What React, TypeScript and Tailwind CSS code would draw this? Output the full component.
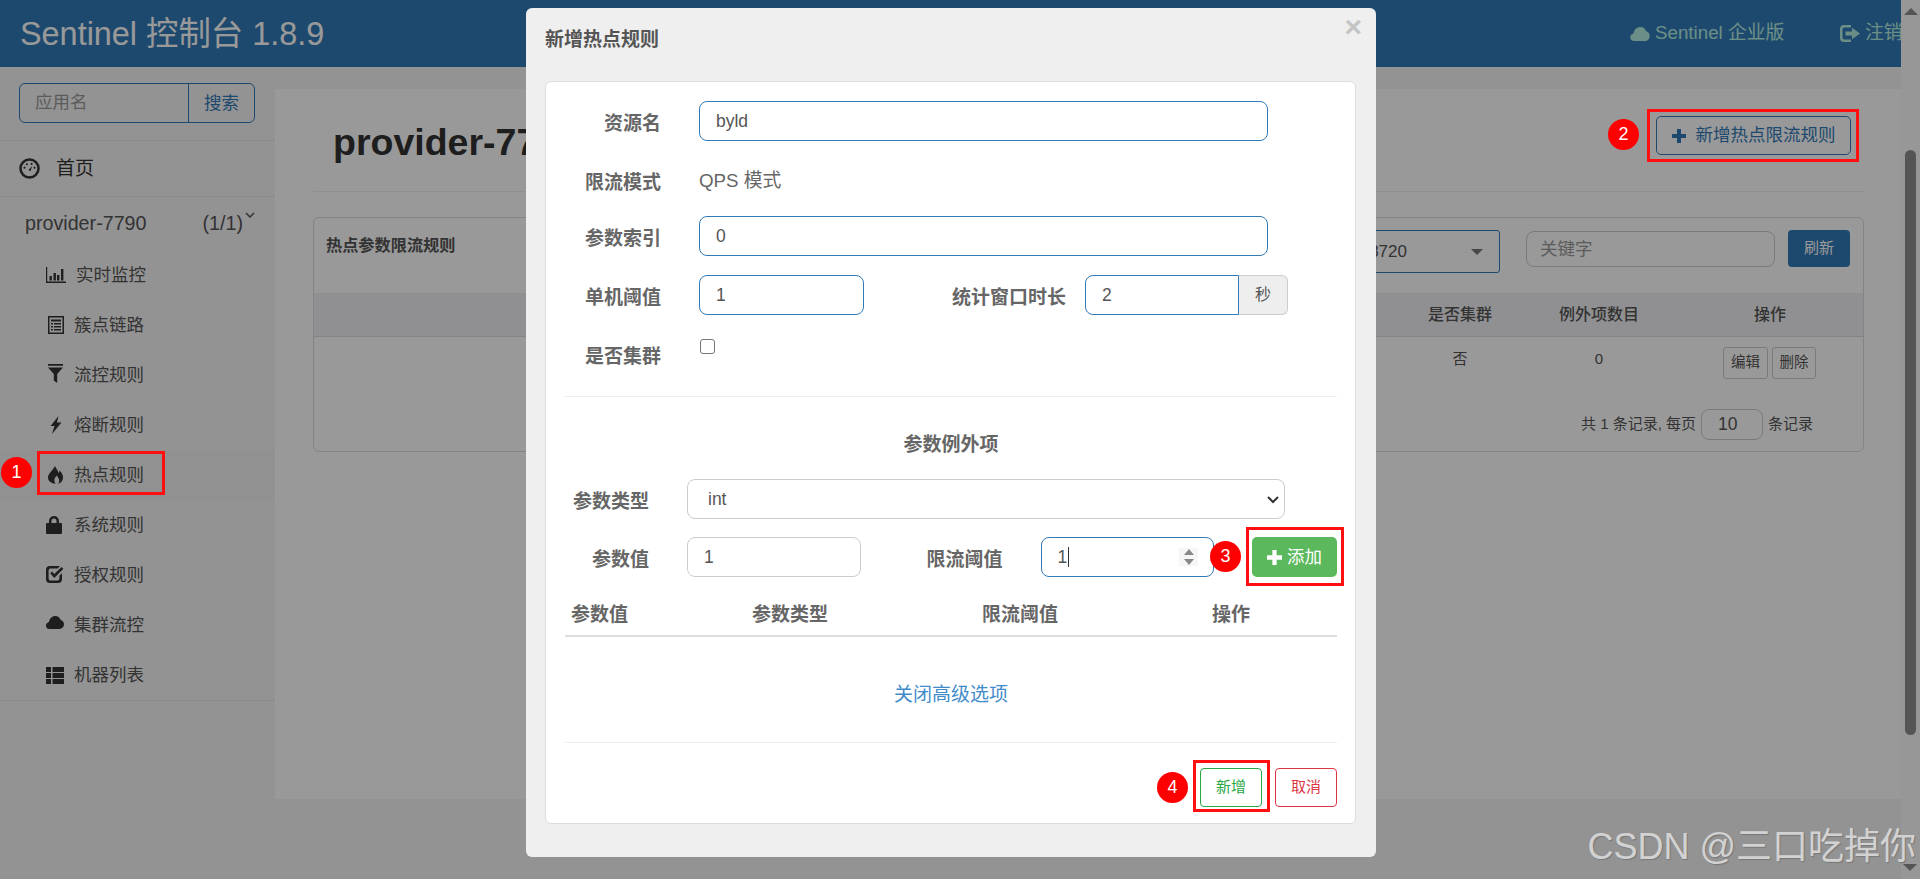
import React from "react";

const Svg = ({ w, h, vb, className, children }: { w: number; h: number; vb: string; className?: string; children: React.ReactNode }) => (
  <svg width={w} height={h} viewBox={vb} className={className} fill="currentColor">
    {children}
  </svg>
);

const IconDash = () => (
  <Svg w={21} h={21} vb="0 0 20 20">
    <circle cx="10" cy="10" r="8.6" fill="none" stroke="currentColor" strokeWidth="2.4" />
    <circle cx="5.2" cy="9.2" r="1" />
    <circle cx="7.5" cy="6" r="1" />
    <circle cx="12" cy="5.6" r="1" />
    <circle cx="14.8" cy="9.2" r="1" />
    <path d="M9 11.5 L12.5 7.5 L11 12.5 Z" />
  </Svg>
);
const IconStats = () => (
  <Svg w={20} h={16} vb="0 0 20 16">
    <path d="M0 0h1.2v14.6H20V16H0z" />
    <path d="M3.500 9h2.400v4.500H3.500zM7.500 6h2.400v7.500H7.500zM11 8h2.400v5.500H11zM15 2h2.400v11.500H15z" />
  </Svg>
);
const IconList = () => (
  <Svg w={16} h={18} vb="0 0 16 18">
    <path fillRule="evenodd" d="M0 0h16v18H0zM1.500 1.500v15h13v-15z" />
    <path d="M3 3.500h10v2H3zM3 7h2v1.600H3zM6 7h7v1.600H6zM3 10h2v1.600H3zM6 10h7v1.600H6zM3 13h2v1.600H3zM6 13h7v1.600H6z" />
  </Svg>
);
const IconFilter = () => (
  <Svg w={15} h={19} vb="0 0 15 19">
    <path d="M0 0h15v1.800H0zM0 3.400h15L9.200 10v9l-3.400-2.600V10z" />
  </Svg>
);
const IconFlash = () => (
  <Svg w={12} h={18} vb="0 0 12 18">
    <path d="M8.500 0 0.500 10h4L2 18l9.500-11.500h-4.600z" />
  </Svg>
);
const IconFire = () => (
  <Svg w={15} h={18} vb="0 0 15 18">
    <path d="M7 0c1.200 3.200 3 4 3.400 7 .8-.6 1.200-1.500 1.200-2.400 2 2 3.400 4.400 3.400 7 0 3.400-2.200 5.800-5.400 6.400 1.400-1.200 2-2.800 1.400-4.600-.4-1.400-1.600-2.200-2-3.800-1.400 1.200-2.600 2.600-2.600 4.800 0 1.600.6 2.800 1.600 3.600C3 17.400 0 15.200 0 11.600 0 7.400 4.600 5 7 0z" />
  </Svg>
);
const IconLock = () => (
  <Svg w={16} h={18} vb="0 0 16 18">
    <path fillRule="evenodd" d="M3 7V5a5 5 0 0 1 10 0v2h2a1 1 0 0 1 1 1v9a1 1 0 0 1-1 1H1a1 1 0 0 1-1-1V8a1 1 0 0 1 1-1zM5.500 7h5V5a2.500 2.500 0 0 0-5 0z" />
  </Svg>
);
const IconCheck = () => (
  <Svg w={18} h={17} vb="0 0 18 17">
    <path d="M4 0H14L11.600 2.600H4.500A1.900 1.900 0 0 0 2.600 4.500v8A1.900 1.900 0 0 0 4.500 14.400h7A1.900 1.900 0 0 0 13.400 12.500V9.800L16 7.200V13A4 4 0 0 1 12 17H4a4 4 0 0 1-4-4V4a4 4 0 0 1 4-4z" />
    <path d="M4.200 7.300 6 5.600l2.300 2.500L15.600 1 17.400 2.800 8.300 12z" />
  </Svg>
);
const IconCloud = ({ w = 18, h = 13 }: { w?: number; h?: number }) => (
  <Svg w={w} h={h} vb="0 0 18 13">
    <path d="M3.600 13A3.600 3.600 0 0 1 0 9.500C0 7.600 1.400 6.300 3 6 3.400 2.600 6 0 9.300 0c2.600 0 4.500 1.400 5.200 3.700C16.600 4.300 18 6 18 8.300 18 11 16 13 13.500 13z" />
  </Svg>
);
const IconThList = () => (
  <Svg w={18} h={17} vb="0 0 18 17">
    <path d="M0 0h5v5H0zM6.500 0H18v5H6.500zM0 6h5v5H0zM6.500 6H18v5H6.500zM0 12h5v5H0zM6.500 12H18v5H6.500z" />
  </Svg>
);
const IconPlus = ({ s = 14 }: { s?: number }) => (
  <Svg w={s} h={s} vb="0 0 14 14">
    <path d="M5 0h4v5h5v4H9v5H5V9H0V5h5z" />
  </Svg>
);
const IconLogout = () => (
  <Svg w={20} h={17} vb="0 0 20 17">
    <path d="M4 0h7v2.500H4.500A2 2 0 0 0 2.500 4.500v8a2 2 0 0 0 2 2H11V17H4a4 4 0 0 1-4-4V4a4 4 0 0 1 4-4z" />
    <path d="M5.500 6.500H12V2.800L20 8.500 12 14.200V10.500H5.500z" />
  </Svg>
);

const menu: { label: string; icon: React.ReactNode; wrap: string; active?: boolean }[] = [
  { label: "实时监控", icon: <IconStats />, wrap: "w-[30px] pl-0" },
  { label: "簇点链路", icon: <IconList />, wrap: "w-[28px] pl-[2px] mb-[1px]" },
  { label: "流控规则", icon: <IconFilter />, wrap: "w-[28px] pl-[2px] mb-[3px]" },
  { label: "熔断规则", icon: <IconFlash />, wrap: "w-[28px] pl-[4px]" },
  { label: "热点规则", icon: <IconFire />, wrap: "w-[28px] pl-[2px]", active: true },
  { label: "系统规则", icon: <IconLock />, wrap: "w-[28px] pl-0 mb-[1px]" },
  { label: "授权规则", icon: <IconCheck />, wrap: "w-[28px] pl-0 mb-[1px]" },
  { label: "集群流控", icon: <IconCloud />, wrap: "w-[28px] pl-0 mb-[6px]" },
  { label: "机器列表", icon: <IconThList />, wrap: "w-[28px] pl-0" },
];

const Sidebar = () => (
  <aside className="w-[275px] shrink-0 text-[#555]">
    <div className="border-b border-[#e7e7e7] px-[19px] pb-[17px] pt-[16px]">
      <div className="flex h-[40px] w-[236px] rounded-[6px] border border-[#337ab7] text-[17.500px]">
        <div className="flex-1 pl-[15px] pt-[5px] text-[#999]">应用名</div>
        <div className="w-[66px] border-l border-[#337ab7] text-center leading-[38px] text-[#337ab7]">搜索</div>
      </div>
    </div>
    <div className="flex h-[56px] items-center border-b border-[#e7e7e7] pl-[19px] text-[#333]">
      <IconDash />
      <span className="ml-[16px] pt-[2px] text-[19px]">首页</span>
    </div>
    <div className="flex h-[53px] items-center justify-between pl-[25px] pr-[20px] text-[19.700px]">
      <span>provider-7790</span>
      <span className="relative pr-[12px]">
        (1/1)
        <svg width="10" height="6" viewBox="0 0 10 6" className="absolute right-0 top-[3px]" fill="none" stroke="currentColor" strokeWidth="1.500">
          <path d="M1 1l4 4 4-4" />
        </svg>
      </span>
    </div>
    <div className="border-b border-[#e7e7e7]">
      {menu.map((m) => (
        <div key={m.label} className={`flex h-[50px] items-center text-[17.500px] ${m.active ? "bg-[#f2f2f2]" : ""}`}>
          <span className={`ml-[46px] flex justify-start text-[#333] ${m.wrap}`}>{m.icon}</span>
          <span>{m.label}</span>
        </div>
      ))}
    </div>
  </aside>
);

const Main = () => (
  <main className="mt-[22px] h-[710px] flex-1 bg-white pl-[38px] pr-[37px] text-[#333]">
    <div className="flex h-[103px] items-start justify-between border-b border-[#eeeeee] pl-[20px] pr-[13px]">
      <h1 className="mt-[28px] text-[37.500px] font-bold leading-[50px]">provider-7790</h1>
      <button className="mt-[27px] flex h-[39px] w-[195px] items-center justify-center rounded-[5px] border border-[#337ab7] text-[17.500px] text-[#337ab7]">
        <IconPlus />
        <span className="ml-[10px]">新增热点限流规则</span>
      </button>
    </div>
    <section className="mt-[25px] h-[235px] rounded-[6px] border border-[#dddddd]">
      <div className="flex h-[75px] pl-[12px] pr-[13px]">
        <div className="mt-[15px] text-[16.200px] font-bold text-[#555]">热点参数限流规则</div>
        <div className="ml-auto mt-[12px] flex h-[43px] w-[300px] items-center justify-between rounded-[3px] border border-[#337ab7] pl-[5px] pr-[16px] text-[17px] text-[#555]">
          <span className="ml-auto mr-[64px]">192.168.1.8:8720</span>
          <span className="h-0 w-0 border-x-[6px] border-t-[6px] border-x-transparent border-t-[#777]" />
        </div>
        <div className="ml-[26px] mt-[13px] h-[36px] w-[249px] rounded-[8px] border border-[#ccc] pl-[13px] pt-[4px] text-[17.500px] leading-[26px] text-[#999]">关键字</div>
        <button className="ml-[13px] mt-[12px] h-[37px] w-[62px] rounded-[4px] bg-[#337ab7] text-[15px] text-white">刷新</button>
      </div>
      <div className="flex h-[44px] items-center justify-end border-b border-[#dddddd] bg-[#f1f1f3] text-[16px] font-medium text-[#555]">
        <div className="w-[122px] text-center">是否集群</div>
        <div className="w-[156px] text-center">例外项数目</div>
        <div className="w-[186px] text-center">操作</div>
      </div>
      <div className="flex h-[72px] justify-end text-[15px] text-[#555]">
        <div className="w-[122px] pt-[11px] text-center">否</div>
        <div className="w-[156px] pt-[11px] text-center">0</div>
        <div className="flex w-[186px] gap-[4px] pl-[46px] pt-[10px]">
          <button className="h-[32px] w-[45px] rounded-[3px] border border-[#ccc] text-[14.500px]">编辑</button>
          <button className="h-[32px] w-[44px] rounded-[3px] border border-[#ccc] text-[14.500px]">删除</button>
        </div>
      </div>
      <div className="flex items-center justify-end pr-[50px] text-[15px] text-[#555]">
        <span>共 1 条记录, 每页</span>
        <span className="mx-[5px] flex h-[31px] w-[62px] items-center rounded-[8px] border border-[#ccc] pl-[16px] text-[17.500px]">10</span>
        <span>条记录</span>
      </div>
    </section>
  </main>
);

const Label = ({ w, children, className = "" }: { w: string; children: React.ReactNode; className?: string }) => (
  <div className={`${w} shrink-0 pt-[5px] text-right text-[19px] font-bold leading-[35px] text-[#666] ${className}`}>{children}</div>
);

const Box = ({ value, className = "" }: { value: string; className?: string }) => (
  <div className={`flex h-[40px] items-center rounded-[8px] border border-[#337ab7] pl-[16px] text-[17.500px] text-[#555] ${className}`}>{value}</div>
);

const Modal = () => (
  <div className="absolute left-[526px] top-[8px] h-[849px] w-[850px] rounded-[6px] bg-[#efefef] px-[19px] text-[#555]">
    <span className="absolute right-[14px] top-[5px] text-[30px] font-bold leading-[28px] text-[#c4c4c4]">×</span>
    <h3 className="h-[73px] pt-[20px] text-[19px] font-bold leading-[24px]">新增热点规则</h3>
    <div className="h-[743px] w-[811px] rounded-[6px] border border-[#dddddd] bg-white pl-[19px] pr-[18px] pt-[19px]">
      <div className="flex gap-[38px]">
        <Label w="w-[96px]">资源名</Label>
        <Box value="byld" className="w-[569px]" />
      </div>
      <div className="mt-[20px] flex h-[40px] gap-[38px]">
        <Label w="w-[96px]" className="-mt-[1px]">限流模式</Label>
        <div className="pt-[8px] text-[18.750px] leading-[24px] text-[#666]">QPS 模式</div>
      </div>
      <div className="mt-[15px] flex gap-[38px]">
        <Label w="w-[96px]">参数索引</Label>
        <Box value="0" className="w-[569px]" />
      </div>
      <div className="mt-[19px] flex">
        <Label w="w-[96px]">单机阈值</Label>
        <Box value="1" className="ml-[38px] w-[165px]" />
        <Label w="w-[114px]" className="ml-[88px]">统计窗口时长</Label>
        <div className="ml-[19px] flex">
          <Box value="2" className="w-[154px] rounded-r-none" />
          <div className="flex h-[40px] w-[49px] items-center justify-center rounded-r-[6px] border border-l-0 border-[#cccccc] bg-[#eeeeee] text-[16px]">秒</div>
        </div>
      </div>
      <div className="mt-[20px] flex h-[62px] gap-[38px] border-b border-[#eeeeee]">
        <Label w="w-[96px]" className="-mt-[1px] h-[40px]">是否集群</Label>
        <div className="ml-[1px] mt-[4px] h-[15px] w-[15px] rounded-[3px] border border-[#767676] bg-white" />
      </div>
      <div className="mt-[32px] text-center text-[19px] font-bold leading-[32px] text-[#666]">参数例外项</div>
      <div className="mt-[18px] flex gap-[38px]">
        <Label w="w-[84px]">参数类型</Label>
        <div className="relative flex h-[40px] w-[598px] items-center rounded-[8px] border border-[#cccccc] pl-[20px] text-[17.500px]">
          int
          <svg width="12" height="8" viewBox="0 0 12 8" className="absolute right-[5px] top-[16px]" fill="none" stroke="#333" strokeWidth="2">
            <path d="M1 1l5 5 5-5" />
          </svg>
        </div>
      </div>
      <div className="mt-[18px] flex">
        <Label w="w-[84px]">参数值</Label>
        <div className="ml-[38px] flex h-[40px] w-[174px] items-center rounded-[8px] border border-[#cccccc] pl-[16px] text-[17.500px]">1</div>
        <Label w="w-[76px]" className="ml-[66px]">限流阈值</Label>
        <div className="relative ml-[38px] flex h-[40px] w-[174px] items-center rounded-[8px] border border-[#337ab7] pl-[16px] text-[17.500px]">
          1<span className="ml-[1px] h-[20px] w-px bg-[#333]" />
          <span className="absolute right-[15px] top-[10px] flex w-[19px] flex-col items-center gap-[4px] bg-[#f6f6f6] py-[1px]">
            <span className="h-0 w-0 border-x-[5px] border-b-[6px] border-x-transparent border-b-[#888]" />
            <span className="h-0 w-0 border-x-[5px] border-t-[6px] border-x-transparent border-t-[#888]" />
          </span>
        </div>
        <button className="ml-[38px] flex h-[40px] w-[85px] items-center justify-center gap-[5px] rounded-[5px] bg-[#5cb85c] text-[17.500px] text-white">
          <IconPlus s={15} />
          添加
        </button>
      </div>
      <div className="mt-[24px] flex h-[36px] border-b-2 border-[#dddddd] pl-[6px] text-[19px] font-bold leading-[28px] text-[#666]">
        <div className="w-[181px]">参数值</div>
        <div className="w-[230px]">参数类型</div>
        <div className="w-[230px]">限流阈值</div>
        <div>操作</div>
      </div>
      <div className="flex h-[106px] items-center justify-center border-b border-[#eeeeee] pt-[12px] text-[19px] text-[#428bca]">关闭高级选项</div>
      <div className="mt-[25px] flex justify-end gap-[13px] text-[15px]">
        <button className="h-[39px] w-[62px] rounded-[4px] border border-[#28a745] text-[#28a745]">新增</button>
        <button className="h-[39px] w-[62px] rounded-[4px] border border-[#dc3545] text-[#dc3545]">取消</button>
      </div>
    </div>
  </div>
);

const Badge = ({ n, pos }: { n: number; pos: string }) => (
  <div className={`absolute flex h-[31px] w-[31px] items-center justify-center rounded-full bg-[#ff0000] text-[18px] text-white ${pos}`}>{n}</div>
);
const RedBox = ({ pos }: { pos: string }) => <div className={`absolute border-[3px] border-[#ff0f0f] ${pos}`} />;

export default function App() {
  return (
    <div className="relative h-[879px] w-full overflow-hidden bg-[#f5f5f5] [font-family:'Liberation_Sans','Noto_Sans_CJK_SC',sans-serif]">
      <header className="flex h-[67px] items-center bg-[#337ab7] pl-[20px] text-white">
        <div className="text-[32.400px] leading-[60px]">Sentinel 控制台 1.8.9</div>
        <div className="ml-auto flex items-center text-[18.750px] text-[#b3efe0]">
          <IconCloud w={20} h={14} />
          <span className="ml-[5px] w-[185px]">Sentinel 企业版</span>
          <IconLogout />
          <span className="ml-[5px] w-[55px] whitespace-nowrap">注销</span>
        </div>
      </header>
      <div className="flex pr-[19px]">
        <Sidebar />
        <Main />
      </div>

      <div className="absolute inset-0 bg-black/40" />

      <Modal />

      <div className="absolute bottom-0 right-0 top-0 w-[19px] bg-[#979797]">
        <div className="mx-auto mt-[8px] h-0 w-0 border-x-[7px] border-b-[7px] border-x-transparent border-b-[#555]" />
        <div className="absolute left-[4px] top-[150px] h-[585px] w-[11px] rounded-[6px] bg-[#555]" />
        <div className="absolute bottom-[8px] left-[2px] h-0 w-0 border-x-[7px] border-t-[7px] border-x-transparent border-t-[#555]" />
      </div>

      <div className="absolute bottom-[10px] right-[4px] text-[36px] leading-[44px] text-[#d2d2d2] [text-shadow:1px_1px_1px_#777]">CSDN @三口吃掉你</div>

      <Badge n={1} pos="left-[1px] top-[457px]" />
      <RedBox pos="left-[37px] top-[451px] h-[44px] w-[128px]" />
      <Badge n={2} pos="left-[1608px] top-[119px]" />
      <RedBox pos="left-[1647px] top-[109px] h-[53px] w-[212px]" />
      <Badge n={3} pos="left-[1210px] top-[541px]" />
      <RedBox pos="left-[1246px] top-[527px] h-[59px] w-[98px]" />
      <Badge n={4} pos="left-[1157px] top-[772px]" />
      <RedBox pos="left-[1193px] top-[760px] h-[52px] w-[77px]" />
    </div>
  );
}
